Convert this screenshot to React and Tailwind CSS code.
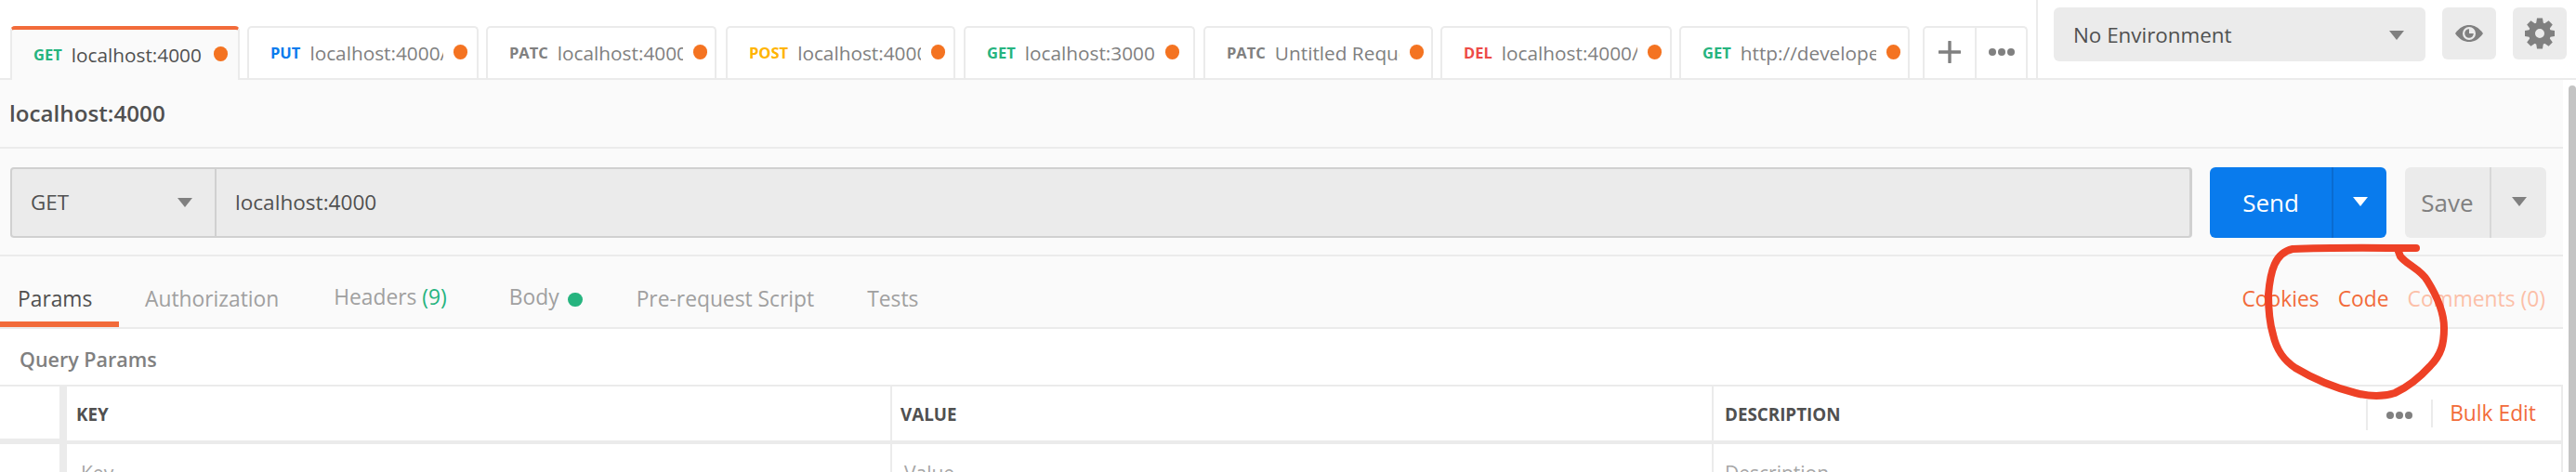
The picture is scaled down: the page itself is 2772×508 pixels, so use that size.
import React from "react";

const tabs = [
  { m: "GET", c: "text-[#26b47f]", t: "localhost:4000", box: "w-[247px] mr-[8px]", tw: "w-[140px]", dot: "ml-[13px]", active: true },
  { m: "PUT", c: "text-[#097bed]", t: "localhost:4000/", box: "w-[249px] mr-[8px]", tw: "w-[144px]", dot: "ml-[11px]" },
  { m: "PATC", c: "text-[#808080]", t: "localhost:4000/", box: "w-[248px] mr-[10px]", tw: "w-[135px]", dot: "ml-[11px]" },
  { m: "POST", c: "text-[#ffb400]", t: "localhost:4000/", box: "w-[247px] mr-[9px]", tw: "w-[133px]", dot: "ml-[11px]" },
  { m: "GET", c: "text-[#26b47f]", t: "localhost:3000", box: "w-[249px] mr-[9px]", tw: "w-[140px]", dot: "ml-[11px]" },
  { m: "PATC", c: "text-[#808080]", t: "Untitled Request", box: "w-[247px] mr-[8px]", tw: "w-[134px]", dot: "ml-[11px]" },
  { m: "DEL", c: "text-[#ed4b48]", t: "localhost:4000/", box: "w-[249px] mr-[8px]", tw: "w-[146px]", dot: "ml-[11px]" },
  { m: "GET", c: "text-[#26b47f]", t: "http://developer", box: "w-[248px] mr-[14px]", tw: "w-[146px]", dot: "ml-[11px]" },
];

function Arrow({ className = "fill-[#808080]" }) {
  return (
    <svg width="16" height="10" viewBox="0 0 16 10" className={className}>
      <polygon points="0,0 16,0 8,10" />
    </svg>
  );
}

function Tab({ tab }) {
  return (
    <div
      className={`${tab.box} h-[56px] flex shrink-0 items-start pl-[23px] rounded-t-[5px] border-x-2 ${
        tab.active
          ? "h-[58px] -mb-[2px] bg-[#fafafa] border-[#ebebeb] border-t-4 border-t-[#f26b3a] relative pt-[13px]"
          : "bg-white border-t-2 border-[#ebebeb] pt-[13px]"
      }`}
    >
      <span className={`${tab.c} text-[16.5px] leading-[28px] font-bold mr-[10px]`}>{tab.m}</span>
      <span className={`${tab.tw} overflow-hidden whitespace-nowrap text-[20.8px] leading-[28px] ${tab.active ? "text-[#505050]" : "text-[#808080]"}`}>
        {tab.t}
      </span>
      <span className={`${tab.dot} mt-[5px] w-[15px] h-[16px] rounded-full bg-[#f47321]`} />
    </div>
  );
}

function Gear() {
  const angles = [0, 45, 90, 135, 180, 225, 270, 315];
  return (
    <svg width="32" height="34" viewBox="0 0 32 34">
      <circle cx="16" cy="17" r="8.5" fill="none" stroke="#808080" strokeWidth="7" />
      {angles.map((a) => (
        <polygon key={a} points="13,0.5 19,0.5 20,7 12,7" fill="#808080" transform={`rotate(${a} 16 17)`} />
      ))}
    </svg>
  );
}

function Eye() {
  return (
    <svg width="32" height="20" viewBox="0 0 32 20">
      <path d="M1 10C6 3 11 1 16 1s10 2 15 9c-5 7-10 9-15 9S6 17 1 10z" fill="#808080" />
      <circle cx="16" cy="10" r="7" fill="#ebebeb" />
      <path d="M16 5.2a4.8 4.8 0 1 0 4.8 4.8H16z" fill="#808080" />
    </svg>
  );
}

function Dots({ size = "w-[8px] h-[8px]", gap = "gap-[2px]" }) {
  return (
    <div className={`flex ${gap}`}>
      <span className={`${size} rounded-full bg-[#808080]`} />
      <span className={`${size} rounded-full bg-[#808080]`} />
      <span className={`${size} rounded-full bg-[#808080]`} />
    </div>
  );
}

function ReqTab({ box, children, className = "text-[#a0a0a0]" }) {
  return <div className={`${box} ${className} text-[22.8px] leading-[30px] whitespace-nowrap flex items-center`}>{children}</div>;
}

function TableRow({ header }) {
  const cell = header
    ? "text-[18.8px] font-bold text-[#505050] pt-[16px]"
    : "text-[21px] text-[#a6a6a6] pt-[16px]";
  return (
    <div className={`flex ${header ? "h-[62px] border-b-4 border-[#ebebeb]" : "h-[40px]"}`}>
      <div className={`w-[64px] shrink-0 ${header ? "border-b-2 border-[#ebebeb]" : ""}`} />
      <div className="w-[8px] shrink-0 bg-[#ebebeb]" />
      <div className={`w-[886px] shrink-0 ${header ? "pl-[10px]" : "pl-[15px]"} ${cell}`}>{header ? "KEY" : "Key"}</div>
      <div className="w-[2px] shrink-0 bg-[#ebebeb]" />
      <div className={`w-[882px] shrink-0 ${header ? "pl-[9px]" : "pl-[13px]"} ${cell}`}>{header ? "VALUE" : "Value"}</div>
      <div className="w-[2px] shrink-0 bg-[#ebebeb]" />
      <div className={`flex-1 pl-[12px] flex ${cell}`}>
        <span className="flex-1">{header ? "DESCRIPTION" : "Description"}</span>
        {header && (
          <div className="flex items-start -mt-[2px]">
            <div className="w-[2px] h-[33px] bg-[#ebebeb]" />
            <div className="w-[68px] h-[33px] flex items-center justify-center">
              <Dots />
            </div>
            <div className="w-[2px] h-[30px] bg-[#ebebeb]" />
            <span className="ml-[18px] mr-[27px] text-[22.8px] font-normal text-[#f26b3a] leading-[30px]">Bulk Edit</span>
          </div>
        )}
      </div>
      <div className="w-[2px] shrink-0 bg-[#ebebeb]" />
    </div>
  );
}

export default function App() {
  return (
    <div className="relative w-[2772px] h-[508px] overflow-hidden bg-white font-['Open_Sans',sans-serif]">
      {/* top bar */}
      <header className="flex h-[86px] border-b-2 border-[#ebebeb]">
        <div className="w-[2193px] shrink-0 border-r-2 border-[#ebebeb] pt-[28px] pl-[11px] flex">
          {tabs.map((t, i) => (
            <Tab key={i} tab={t} />
          ))}
          <div className="w-[113px] h-[56px] flex rounded-t-[5px] border-x-2 border-t-2 border-[#ebebeb]">
            <div className="w-[54px] flex items-center justify-center pb-[3px]">
              <svg width="24" height="24" viewBox="0 0 24 24">
                <path d="M12 1v22M1 12h22" stroke="#808080" strokeWidth="3.4" strokeLinecap="round" />
              </svg>
            </div>
            <div className="w-[2px] bg-[#ebebeb]" />
            <div className="flex-1 flex items-center justify-center pb-[3px]">
              <Dots />
            </div>
          </div>
        </div>
        <div className="flex items-start pt-[8px] pl-[17px]">
          <div className="w-[400px] h-[58px] rounded-[6px] bg-[#ebebeb] flex items-center justify-between pl-[21px] pr-[23px] pt-[1px] text-[22.4px] text-[#505050]">
            <span>No Environment</span>
            <Arrow />
          </div>
          <div className="ml-[18px] w-[58px] h-[56px] rounded-[6px] bg-[#ebebeb] flex items-center justify-center">
            <Eye />
          </div>
          <div className="ml-[18px] w-[58px] h-[56px] rounded-[6px] bg-[#ebebeb] flex items-center justify-center">
            <Gear />
          </div>
        </div>
      </header>

      <div className="flex">
        <main className="w-[2758px] shrink-0">
          {/* title */}
          <div className="h-[74px] bg-[#fafafa] border-b-2 border-[#ebebeb] pl-[10px] pt-[1px] flex items-center">
            <h1 className="text-[24.2px] font-semibold text-[#505050]">localhost:4000</h1>
          </div>

          {/* url row */}
          <div className="h-[116px] bg-[#fafafa] border-b-2 border-[#ebebeb] pt-[20px] pl-[11px] flex">
            <div className="w-[2348px] h-[76px] flex rounded-[4px] bg-[#ebebeb] border-2 border-[#d0d0d0] border-r-[3px]">
              <div className="w-[220px] shrink-0 border-r-2 border-[#d0d0d0] pl-[20px] pr-[24px] flex items-center justify-between text-[22.4px] font-medium text-[#505050]">
                <span>GET</span>
                <Arrow />
              </div>
              <div className="pl-[20px] flex items-center text-[22.6px] text-[#505050]">localhost:4000</div>
            </div>
            <div className="ml-[19px] w-[190px] h-[76px] flex rounded-[6px] bg-[#097bed] text-white">
              <div className="w-[133px] border-r-2 border-[#0a6bd0] flex items-center justify-center text-[26px] font-medium">Send</div>
              <div className="flex-1 flex items-center justify-center pb-[2px]">
                <Arrow className="fill-white" />
              </div>
            </div>
            <div className="ml-[20px] w-[152px] h-[76px] flex rounded-[6px] bg-[#ebebeb] text-[#808080]">
              <div className="w-[93px] border-r-2 border-[#d8d8d8] flex items-center justify-center text-[26px] font-medium">Save</div>
              <div className="flex-1 flex items-center justify-center pb-[2px]">
                <Arrow />
              </div>
            </div>
          </div>

          {/* request tabs */}
          <nav className="h-[78px] bg-[#fafafa] border-b-2 border-[#ebebeb] flex">
            <div className="w-[128px] h-[76px] border-b-[6px] border-[#f26b3a] pl-[19px] pt-[31px]">
              <ReqTab box="" className="text-[#505050]">Params</ReqTab>
            </div>
            <ReqTab box="ml-[28px] pt-[31px] h-[61px]">Authorization</ReqTab>
            <ReqTab box="ml-[59px] pt-[29px] h-[59px]">
              Headers&nbsp;<span className="text-[#26b47f]">(9)</span>
            </ReqTab>
            <ReqTab box="ml-[67px] pt-[29px] h-[59px]">
              Body
              <span className="ml-[9px] mt-[5px] w-[16px] h-[15px] rounded-full bg-[#26b47f]" />
            </ReqTab>
            <ReqTab box="ml-[58px] pt-[31px] h-[61px]">Pre-request Script</ReqTab>
            <ReqTab box="ml-[57px] pt-[31px] h-[61px]">Tests</ReqTab>
            <div className="flex-1" />
            <ReqTab box="pt-[31px] h-[61px]" className="text-[#f26b3a]">Cookies</ReqTab>
            <ReqTab box="ml-[20px] pt-[31px] h-[61px]" className="text-[#f26b3a]">Code</ReqTab>
            <ReqTab box="ml-[20px] mr-[19px] pt-[31px] h-[61px]" className="text-[#fcbfa8]">Comments (0)</ReqTab>
          </nav>

          {/* query params */}
          <div className="h-[60px] pl-[21px] pt-[17px] text-[21.5px] leading-[32px] font-semibold text-[#808080]">Query Params</div>
          <div className="border-t-2 border-[#ebebeb]">
            <TableRow header />
            <TableRow />
          </div>
        </main>
        <div className="flex-1 pt-[6px] pl-[6px]">
          <div className="h-[420px] rounded-t-[5px] bg-[#c4c4c4]" />
        </div>
      </div>

      {/* hand-drawn annotation */}
      <svg className="absolute left-0 top-0 pointer-events-none" width="2772" height="508" viewBox="0 0 2772 508">
        <path
          d="M2600 267 C2560 267 2510 266 2467 268 C2448 272 2443 292 2441 317 C2441 335 2443 350 2446 360 C2450 378 2458 388 2470 396 C2490 408 2515 418 2535 423 C2550 427 2565 427 2577 423 C2590 417 2605 405 2615 394 C2627 382 2630 370 2630 353 C2630 335 2622 318 2612 302 C2605 290 2590 285 2583 276 L2580 268"
          fill="none"
          stroke="#ee4126"
          strokeWidth="8"
          strokeLinecap="round"
          strokeLinejoin="round"
        />
      </svg>
    </div>
  );
}
